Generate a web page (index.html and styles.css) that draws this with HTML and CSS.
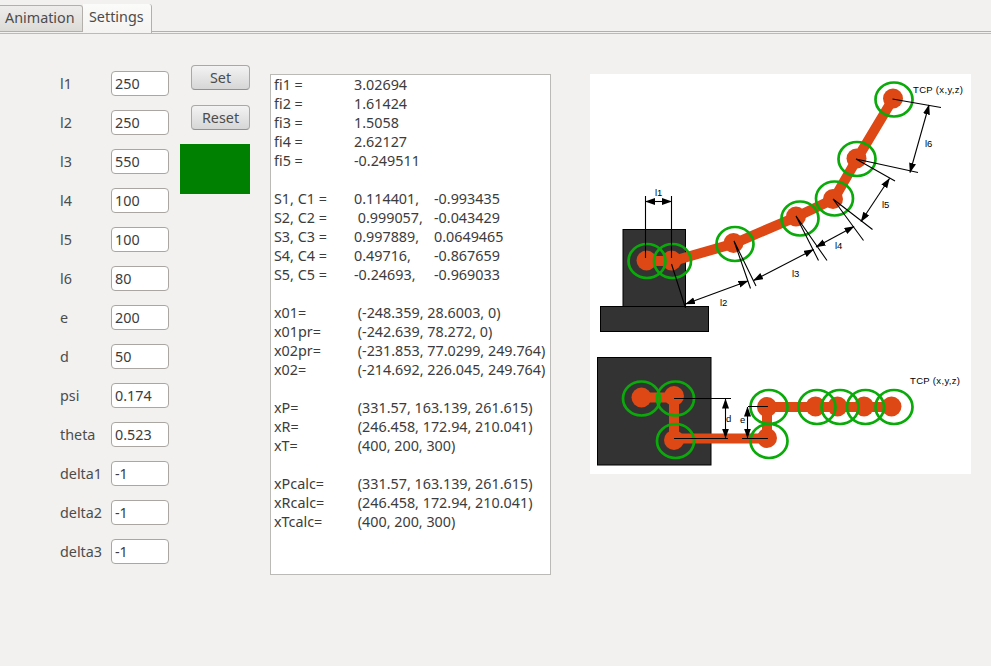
FILE: index.html
```html
<!DOCTYPE html>
<html lang="en">
<head>
<meta charset="utf-8">
<title>Settings</title>
<link rel="stylesheet" href="styles.css">
</head>
<body>
<nav class="tabs">
  <div class="tab">Animation</div>
  <div class="tab active">Settings</div>
</nav>
<main class="page">
  <form class="params">
    <label><span>l1</span><input value="250"></label>
    <label><span>l2</span><input value="250"></label>
    <label><span>l3</span><input value="550"></label>
    <label><span>l4</span><input value="100"></label>
    <label><span>l5</span><input value="100"></label>
    <label><span>l6</span><input value="80"></label>
    <label><span>e</span><input value="200"></label>
    <label><span>d</span><input value="50"></label>
    <label><span>psi</span><input value="0.174"></label>
    <label><span>theta</span><input value="0.523"></label>
    <label><span>delta1</span><input value="-1"></label>
    <label><span>delta2</span><input value="-1"></label>
    <label><span>delta3</span><input value="-1"></label>
  </form>
  <div class="actions">
    <button type="button">Set</button>
    <button type="button">Reset</button>
    <div class="status"></div>
  </div>
  <pre class="output">fi1 =&#9;3.02694
fi2 =&#9;1.61424
fi3 =&#9;1.5058
fi4 =&#9;2.62127
fi5 =&#9;-0.249511

S1, C1 =&#9;0.114401,&#9;-0.993435
S2, C2 =&#9; 0.999057,&#9;-0.043429
S3, C3 =&#9;0.997889,&#9;0.0649465
S4, C4 =&#9;0.49716,&#9;-0.867659
S5, C5 =&#9;-0.24693,&#9;-0.969033

x01=&#9; (-248.359, 28.6003, 0)
x01pr=&#9; (-242.639, 78.272, 0)
x02pr=&#9; (-231.853, 77.0299, 249.764)
x02=&#9; (-214.692, 226.045, 249.764)

xP=&#9; (331.57, 163.139, 261.615)
xR=&#9; (246.458, 172.94, 210.041)
xT=&#9; (400, 200, 300)

xPcalc=&#9; (331.57, 163.139, 261.615)
xRcalc=&#9; (246.458, 172.94, 210.041)
xTcalc=&#9; (400, 200, 300)</pre>
  <svg class="diagram" width="381" height="400" viewBox="590 74 381 400">
    <defs>
      <marker id="arrow" markerUnits="userSpaceOnUse" markerWidth="10" markerHeight="8" refX="9.500" refY="3.500" orient="auto-start-reverse"><path d="M0 0L10 3.500L0 7Z"/></marker>
    </defs>
    <g class="base">
      <rect x="623" y="229.500" width="62.500" height="77"/>
      <rect x="600.500" y="306.500" width="108" height="25"/>
      <rect x="597.500" y="357.500" width="113.500" height="107.500"/>
    </g>
    <g class="links">
      <path d="M647 261H673L734 243.500L796 217L834 199L857 159L893 99"/>
      <path d="M642 397.500H674V438.500H767V407H892"/>
    </g>
    <g class="joints">
      <circle cx="646.500" cy="260.500" r="10"/><circle cx="671.500" cy="260.500" r="10"/>
      <circle cx="733.500" cy="243" r="10"/><circle cx="796" cy="216.500" r="10"/>
      <circle cx="833" cy="199" r="10"/><circle cx="856.500" cy="158.500" r="10"/>
      <circle cx="893" cy="98.500" r="10"/>
      <circle cx="641.500" cy="397.500" r="10"/><circle cx="674" cy="396" r="10"/>
      <circle cx="674" cy="440" r="10"/><circle cx="767" cy="438" r="10"/>
      <circle cx="767" cy="407" r="10"/><circle cx="815.500" cy="406.500" r="10"/>
      <circle cx="837.500" cy="406.500" r="10"/><circle cx="864" cy="406.500" r="10"/>
      <circle cx="891.500" cy="406.500" r="10"/>
    </g>
    <g class="rings">
      <ellipse cx="647" cy="261" rx="18.500" ry="17"/><ellipse cx="672.500" cy="261" rx="18.500" ry="17"/>
      <ellipse cx="735" cy="244" rx="18.500" ry="17"/><ellipse cx="800" cy="218.500" rx="18.500" ry="17"/>
      <ellipse cx="834.500" cy="198.500" rx="18.500" ry="17"/><ellipse cx="857" cy="159" rx="18.500" ry="17"/>
      <ellipse cx="894" cy="99.500" rx="18.500" ry="17"/>
      <ellipse cx="641.500" cy="398.500" rx="18.500" ry="17"/><ellipse cx="675.500" cy="398.500" rx="18.500" ry="17"/>
      <ellipse cx="675.500" cy="441" rx="18.500" ry="17"/><ellipse cx="769" cy="441" rx="18.500" ry="17"/>
      <ellipse cx="769" cy="407" rx="18.500" ry="17"/><ellipse cx="817" cy="407" rx="18.500" ry="17"/>
      <ellipse cx="840" cy="407" rx="18.500" ry="17"/><ellipse cx="865.500" cy="407" rx="18.500" ry="17"/>
      <ellipse cx="894" cy="407" rx="18.500" ry="17"/>
    </g>
    <path class="line" d="M645.500 196V258M671.500 196V258M671.500 264L685.500 308M734 241L750.500 288.500M734 241L756 286M796 216L818.500 260.500M796 216L827 260.500M833 199L863.500 240.500M833 199L872.500 229.500M856 159L895 181M856 159L918 172.500M892.500 99L941 107.500M674 398.500H731M674 438.500H728M748 406.500H768M742 438.500H768"/>
    <g class="dims">
      <path d="M645.500 201.500H671.500"/><path d="M685.500 304L748 281"/>
      <path d="M753.500 280.500L813.500 249.500"/><path d="M816 247L854 226.500"/>
      <path d="M861 221.500L889.500 178.500"/><path d="M910 172.500L929 105"/>
      <path d="M725.500 399V438"/><path d="M747.500 407V438"/>
    </g>
    <g class="names">
      <text x="655" y="196">l1</text><text x="720" y="306">l2</text><text x="792" y="277">l3</text>
      <text x="835" y="249">l4</text><text x="882" y="208">l5</text><text x="925" y="147">l6</text>
      <text x="726" y="422">d</text><text x="740" y="423">e</text>
      <text x="913" y="93" textLength="50">TCP (x,y,z)</text><text x="910" y="384" textLength="50">TCP (x,y,z)</text>
    </g>
  </svg>
</main>
</body>
</html>
```
FILE: styles.css
```css
* { box-sizing: border-box; }
body {
  margin: 0;
  height: 666px;
  overflow: hidden;
  background: #f2f1f0;
  color: #4c4c4c;
  font: 14.35px/19px "Noto Sans", sans-serif;
}
.tabs {
  display: flex;
  align-items: flex-end;
  height: 34px;
  border-bottom: 1px solid #bcbab6;
  background: linear-gradient(#b3b0ac, #b3b0ac) 0 31px / 100% 1px no-repeat;
}
.tab {
  width: 83px;
  height: 27px;
  margin-bottom: 1px;
  padding: 2px 0 0 5px;
  border: solid #b3b0ac;
  border-width: 1px 1px 1px 0;
  border-top-right-radius: 3px;
  background: linear-gradient(#efedeb, #dddbd8);
  white-space: nowrap;
}
.tab.active {
  width: 69px;
  height: 29px;
  margin-bottom: 0;
  padding: 3px 0 0 6px;
  border-width: 0 1px 0 0;
  background: linear-gradient(#fbfbfa, #f4f3f2);
}
.page { display: flex; align-items: flex-start; padding: 37px 0 0 60px; }
.params { display: flex; flex-direction: column; gap: 14px; width: 109px; }
.params label { display: flex; justify-content: space-between; align-items: center; height: 25px; }
input {
  width: 58px;
  height: 25px;
  padding: 0 3px;
  border: 1px solid #aaa7a2;
  border-radius: 4px;
  background: #fff;
  color: #3c3c3c;
  font: inherit;
}
.actions { display: flex; flex-direction: column; align-items: flex-end; width: 81px; margin-top: -6px; }
button {
  width: 59px;
  height: 25px;
  margin-bottom: 15px;
  padding: 0;
  border: 1px solid #aaa8a5;
  border-bottom-color: #929090;
  border-radius: 4px;
  background: linear-gradient(#f3f3f3, #d6d6d6);
  color: #4c4c4c;
  font: inherit;
}
.status { width: 70px; height: 50px; margin-top: -1px; background: #008000; }
.output {
  width: 281px;
  height: 501px;
  margin: 3px 39px 0 20px;
  padding: 0 3px;
  border: 1px solid #bcbab6;
  background: #fff;
  color: #3c3c3c;
  font: inherit;
  tab-size: 80px;
}
.diagram { flex: none; margin-top: 3px; background: #fff; }
.base { fill: #333; stroke: #000; }
.links { fill: none; stroke: #dd4814; stroke-width: 10; }
.joints { fill: #dd4814; }
.rings { fill: none; stroke: #0aaa0a; stroke-width: 2.700; }
.line { fill: none; stroke: #000; stroke-width: 1.100; }
.dims { stroke: #000; stroke-width: 1.100; }
.dims > path { marker-start: url(#arrow); marker-end: url(#arrow); }
.names { fill: #000; font: 9.500px "Liberation Sans", sans-serif; }
```
